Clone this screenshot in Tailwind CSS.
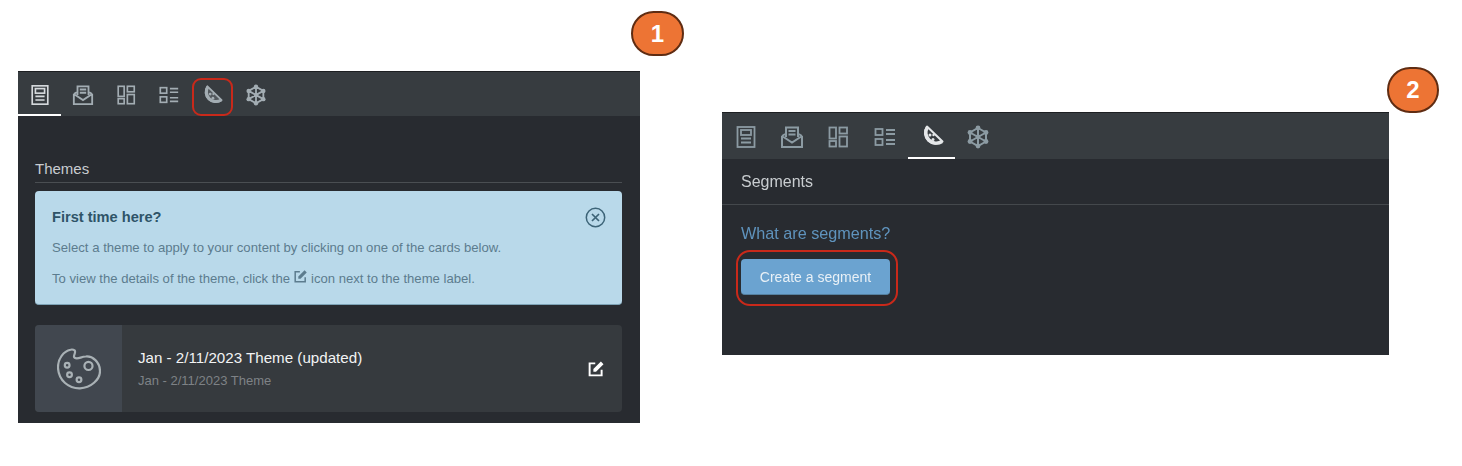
<!DOCTYPE html>
<html lang="en">
<head>
<meta charset="utf-8">
<title>Themes and segments</title>
<script src="https://cdn.jsdelivr.net/npm/@tailwindcss/browser@4"></script>
</head>
<body class="bg-white font-['Liberation_Sans',Arial,sans-serif]">
<div class="relative w-[1462px] h-[466px] overflow-hidden flex items-start pl-[18px] pt-[71px] blur-[0.3px]">

  <!-- Panel 1 -->
  <section class="relative w-[622px] h-[352px] bg-[#282b30] border-t border-[#1d1f22] flex flex-col">
    <nav class="h-[44px] bg-[#373c40] flex items-stretch text-[#a3adb3]">
      <div class="w-[43px] pt-[3px] flex items-center justify-center border-b-2 border-white text-[#d5d9dc]">
        <svg class="w-[22px] h-[22px]" viewBox="0 0 24 24" fill="none" stroke="currentColor" stroke-width="1.8"><rect x="3.5" y="2" width="17" height="20"/><rect x="7" y="5" width="10" height="5"/><path d="M7 13.5h10M7 17.5h10"/></svg>
      </div>
      <div class="w-[43px] pt-[1px] flex items-center justify-center">
        <svg class="w-[22px] h-[22px]" viewBox="0 0 24 24" fill="none" stroke="currentColor" stroke-width="2"><path d="M6 12V2.5h12V12M2 11l4-2.5M22 11l-4-2.5M2 11v11h20V11M2 11l10 6.5 10-6.5M8.5 6h7M8.5 9.5h7"/></svg>
      </div>
      <div class="w-[43px] pt-[1px] flex items-center justify-center">
        <svg class="w-[22px] h-[22px]" viewBox="0 0 24 24" fill="none" stroke="currentColor" stroke-width="1.8"><rect x="3.5" y="2.5" width="6.5" height="11"/><rect x="13.5" y="2.5" width="7.5" height="6"/><rect x="3.5" y="16" width="6.5" height="5.5"/><rect x="13.5" y="11.5" width="7.5" height="10"/></svg>
      </div>
      <div class="w-[43px] pt-[1px] flex items-center justify-center">
        <svg class="w-[22px] h-[22px]" viewBox="0 0 24 24" fill="none" stroke="currentColor" stroke-width="1.8"><rect x="2.5" y="4" width="7" height="6"/><rect x="2.5" y="14" width="7" height="6"/><path d="M13 5h9M13 9h9M13 15h9M13 19h9"/></svg>
      </div>
      <div class="w-[44px] pt-[1px] flex items-center justify-center">
        <svg class="w-[22px] h-[22px]" viewBox="0 0 24 24" fill="none" stroke="currentColor" stroke-width="2" stroke-linejoin="round"><path d="M7 2.5L22.5 17.5A10.9 10.9 0 0 1 7 2.5Z" fill="currentColor" fill-opacity="0.25"/><path d="M22 17.5A10.5 10.5 0 0 1 7.5 3" stroke-width="3.4"/><circle cx="10" cy="11" r="1.5" fill="currentColor" stroke="none"/><circle cx="13" cy="15.5" r="1.5" fill="currentColor" stroke="none"/><circle cx="13.5" cy="11" r="1.2" fill="currentColor" stroke="none"/></svg>
      </div>
      <div class="w-[43px] pt-[1px] flex items-center justify-center">
        <svg class="w-[22px] h-[22px]" viewBox="0 0 24 24" fill="none" stroke="currentColor" stroke-width="2"><path d="M12 3L20 7.5V16.5L12 21L4 16.5V7.5ZM12 3V21M4 7.5L20 16.5M20 7.5L4 16.5"/><g fill="currentColor" stroke="none"><circle cx="12" cy="3" r="2.4"/><circle cx="20" cy="7.5" r="2.4"/><circle cx="20" cy="16.5" r="2.4"/><circle cx="12" cy="21" r="2.4"/><circle cx="4" cy="16.5" r="2.4"/><circle cx="4" cy="7.5" r="2.4"/><circle cx="12" cy="12" r="2.4"/></g></svg>
      </div>
    </nav>

    <div class="flex-1 flex flex-col pl-[17px] pr-[18px] pt-[42px]">
      <h2 class="text-[15px] leading-[21px] text-[#c9cdd0] border-b border-[#4a4e52] h-[25px]">Themes</h2>
      <div class="mt-[8px] h-[114px] bg-[#b9d9ea] border-b border-[#7ea3b6] rounded-[4px] px-[17px] pt-[16px] relative text-[#5c7c8e]">
        <h3 class="text-[14.6px] leading-[20px] font-bold text-[#2f5468]">First time here?</h3>
        <p class="mt-[11px] text-[13.15px] leading-[20px]">Select a theme to apply to your content by clicking on one of the cards below.</p>
        <p class="mt-[11px] text-[13.1px] leading-[20px] flex items-center">To view the details of the theme, click the
          <svg class="w-[15px] h-[15px] mx-[3px] -mt-[5px]" viewBox="0 0 24 24" fill="none" stroke="currentColor" stroke-width="2.4"><path d="M11 4.5H3.5v16h16V13"/><path d="M18.5 2L22 5.5 12 15.5H8.5V12Z" fill="currentColor" stroke="none"/></svg>
          icon next to the theme label.</p>
        <svg class="absolute right-[16px] top-[16px] w-[21px] h-[21px] text-[#3d6478]" viewBox="0 0 21 21" fill="none" stroke="currentColor" stroke-width="1.5"><circle cx="10.5" cy="10.5" r="9.2"/><path d="M7 7l7 7M14 7l-7 7" stroke-width="1.7"/></svg>
      </div>
      <article class="mt-[20px] h-[87px] bg-[#363a3e] rounded-[4px] flex items-center overflow-hidden">
        <div class="w-[87px] h-full bg-[#41474f] flex items-center justify-center shrink-0">
          <svg class="w-[44px] h-[42px] text-[#a9b1b5]" viewBox="0 0 130 122" fill="none" stroke="currentColor" stroke-width="6.5"><path d="M40 4C20 8 2 30 3 58C5 95 35 119 68 118C100 117 127 92 127 68C127 40 105 22 85 24C70 25 62 33 52 28C45 24 58 12 52 6C48 3 44 3 40 4Z"/><circle cx="30" cy="50" r="7"/><circle cx="37" cy="78" r="7"/><circle cx="65" cy="93" r="7"/><circle cx="93" cy="52" r="12"/></svg>
        </div>
        <div class="ml-[16px] flex-1 -mt-[1px]">
          <p class="text-[15.15px] leading-[20px] text-[#f2f3f4]">Jan - 2/11/2023 Theme (updated)</p>
          <p class="mt-[5px] text-[13px] leading-[16px] text-[#7e8286]">Jan - 2/11/2023 Theme</p>
        </div>
        <svg class="w-[18px] h-[18px] mr-[17px] text-white" viewBox="0 0 24 24" fill="none" stroke="currentColor" stroke-width="2.6"><path d="M11 4.5H3.5v16h16V13"/><path d="M18.5 2L22 5.5 12 15.5H8.5V12Z" fill="currentColor" stroke="none"/></svg>
      </article>
    </div>
    <div class="absolute left-[174px] top-[6px] w-[41px] h-[38px] border-2 border-[#c9291a] rounded-[9px]"></div>
  </section>

  <!-- Panel 2 -->
  <section class="relative ml-[82px] mt-[41px] w-[667px] h-[243px] bg-[#282b30] border-t border-[#1d1f22] flex flex-col">
    <nav class="h-[46px] bg-[#373c40] flex items-stretch px-[1px] text-[#8c9ba3]">
      <div class="w-[46px] pt-[2px] flex items-center justify-center">
        <svg class="w-[24px] h-[24px]" viewBox="0 0 24 24" fill="none" stroke="currentColor" stroke-width="1.8"><rect x="3.5" y="2" width="17" height="20"/><rect x="7" y="5" width="10" height="5"/><path d="M7 13.5h10M7 17.5h10"/></svg>
      </div>
      <div class="w-[46px] pt-[2px] flex items-center justify-center">
        <svg class="w-[24px] h-[24px]" viewBox="0 0 24 24" fill="none" stroke="currentColor" stroke-width="2"><path d="M6 12V2.5h12V12M2 11l4-2.5M22 11l-4-2.5M2 11v11h20V11M2 11l10 6.5 10-6.5M8.5 6h7M8.5 9.5h7"/></svg>
      </div>
      <div class="w-[46px] pt-[2px] flex items-center justify-center">
        <svg class="w-[24px] h-[24px]" viewBox="0 0 24 24" fill="none" stroke="currentColor" stroke-width="1.8"><rect x="3.5" y="2.5" width="6.5" height="11"/><rect x="13.5" y="2.5" width="7.5" height="6"/><rect x="3.5" y="16" width="6.5" height="5.5"/><rect x="13.5" y="11.5" width="7.5" height="10"/></svg>
      </div>
      <div class="w-[47px] pt-[2px] flex items-center justify-center">
        <svg class="w-[24px] h-[24px]" viewBox="0 0 24 24" fill="none" stroke="currentColor" stroke-width="1.8"><rect x="2.5" y="4" width="7" height="6"/><rect x="2.5" y="14" width="7" height="6"/><path d="M13 5h9M13 9h9M13 15h9M13 19h9"/></svg>
      </div>
      <div class="w-[47px] pt-[2px] flex items-center justify-center border-b-2 border-white text-[#e4e7e9]">
        <svg class="w-[24px] h-[24px]" viewBox="0 0 24 24" fill="none" stroke="currentColor" stroke-width="2" stroke-linejoin="round"><path d="M7 2.5L22.5 17.5A10.9 10.9 0 0 1 7 2.5Z"/><path d="M22 17.5A10.5 10.5 0 0 1 7.5 3" stroke-width="3.4"/><circle cx="10" cy="11" r="1.5" fill="currentColor" stroke="none"/><circle cx="13" cy="15.5" r="1.5" fill="currentColor" stroke="none"/><circle cx="13.5" cy="11" r="1.2" fill="currentColor" stroke="none"/></svg>
      </div>
      <div class="w-[46px] pt-[2px] flex items-center justify-center">
        <svg class="w-[24px] h-[24px]" viewBox="0 0 24 24" fill="none" stroke="currentColor" stroke-width="2"><path d="M12 3L20 7.5V16.5L12 21L4 16.5V7.5ZM12 3V21M4 7.5L20 16.5M20 7.5L4 16.5"/><g fill="currentColor" stroke="none"><circle cx="12" cy="3" r="2.4"/><circle cx="20" cy="7.5" r="2.4"/><circle cx="20" cy="16.5" r="2.4"/><circle cx="12" cy="21" r="2.4"/><circle cx="4" cy="16.5" r="2.4"/><circle cx="4" cy="7.5" r="2.4"/><circle cx="12" cy="12" r="2.4"/></g></svg>
      </div>
    </nav>
    <h2 class="h-[46px] pt-[1px] flex items-center px-[19px] text-[16px] text-[#c9cdd0] border-b border-[#44484c]">Segments</h2>
    <div class="px-[19px] pt-[17px]">
      <p class="text-[16.2px] leading-[22px] text-[#5f93bd]">What are segments?</p>
      <button class="mt-[15px] pt-[1px] block w-[149px] h-[36px] rounded-[4px] bg-[#6ba3d0] border-b border-[#55809f] text-[14px] text-[#e8f0f6]">Create a segment</button>
    </div>
    <div class="absolute left-[14px] top-[137px] w-[162px] h-[56px] border-2 border-[#c9291a] rounded-[14px]"></div>
  </section>

  <!-- Numbered callouts -->
  <div class="absolute left-[631px] top-[11px] w-[53px] h-[45px] rounded-full bg-[#ed7434] border-2 border-[#5f2c12] flex items-center justify-center text-white font-bold text-[24px]">1</div>
  <div class="absolute left-[1387px] top-[67px] w-[52px] h-[46px] rounded-full bg-[#ed7434] border-2 border-[#5f2c12] flex items-center justify-center text-white font-bold text-[24px]">2</div>
</div>
</body>
</html>
